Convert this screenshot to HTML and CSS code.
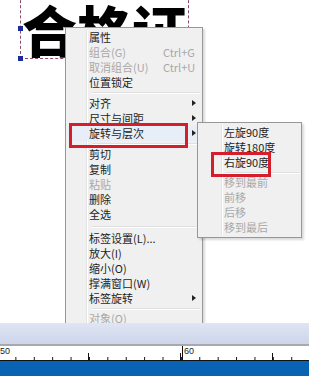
FILE: index.html
```html
<!DOCTYPE html>
<html>
<head>
    <title>合格证 - 标签编辑</title>
    <link rel="stylesheet" href="styles.css">
</head>
<body>
    <div class="workspace">
        <div class="label-text">合格证</div>
        <div class="selection"></div>
        <span class="handle handle-mid"></span>
        <span class="handle handle-bottom"></span>

        <ul class="menu main-menu">
            <li class="item">属性</li>
            <li class="item disabled">组合(G)<span class="key">Ctrl+G</span></li>
            <li class="item disabled">取消组合(U)<span class="key">Ctrl+U</span></li>
            <li class="item">位置锁定</li>
            <li class="sep"></li>
            <li class="item sub">对齐</li>
            <li class="item sub">尺寸与间距</li>
            <li class="item sub active marked">旋转与层次</li>
            <li class="sep"></li>
            <li class="item">剪切</li>
            <li class="item">复制</li>
            <li class="item disabled">粘贴</li>
            <li class="item">删除</li>
            <li class="item">全选</li>
            <li class="sep sep-wide"></li>
            <li class="item">标签设置(L)...</li>
            <li class="item">放大(I)</li>
            <li class="item">缩小(O)</li>
            <li class="item">撑满窗口(W)</li>
            <li class="item sub">标签旋转</li>
            <li class="sep sep-thin"></li>
            <li class="item disabled">对象(O)</li>
        </ul>

        <ul class="menu side-menu">
            <li class="item">左旋90度</li>
            <li class="item">旋转180度</li>
            <li class="item marked">右旋90度</li>
            <li class="sep"></li>
            <li class="item disabled">移到最前</li>
            <li class="item disabled">前移</li>
            <li class="item disabled">后移</li>
            <li class="item disabled">移到最后</li>
        </ul>
    </div>

    <div class="statusbar"></div>

    <div class="ruler">
        <span class="num num-50">50</span>
        <span class="num num-60">60</span>
    </div>

    <div class="bluebar"></div>
</body>
</html>
```

FILE: styles.css
```css
body {
    margin: 0;
    background-color: #fff;
    font-family: "Noto Sans CJK SC", "Liberation Sans", sans-serif;
    overflow: hidden;
}

.workspace {
    position: relative;
    height: 323px;
    overflow: hidden;
}

.label-text {
    display: inline-block;
    padding-left: 22px;
    margin-top: -6px;
    font-size: 55px;
    line-height: 68px;
    font-weight: 900;
    color: #000;
}

/* dashed selection frame round the label text */
.selection {
    position: absolute;
    left: 20px;
    top: -10px;
    width: 167px;
    height: 68px;
    border-left: 1px dashed #8a4a6a;
    border-right: 1px dashed #8a4a6a;
    border-bottom: 1px dashed #8a4a6a;
}

.handle {
    position: absolute;
    left: 18px;
    width: 5px;
    height: 5px;
    background-color: #1c2a9a;
}

.handle-mid {
    top: 26px;
}

.handle-bottom {
    top: 56px;
}

/* context menus */
.menu {
    position: absolute;
    margin: 0;
    padding: 2px 2px;
    list-style: none;
    background-color: #f0f0f0;
    border: 1px solid #979797;
    box-shadow: 2px 2px 2px rgba(0, 0, 0, 0.15);
    font-size: 11px;
    color: #1e1e1e;
}

.menu::before {
    content: "";
    position: absolute;
    top: 2px;
    bottom: 2px;
    width: 1px;
    background-color: #e2e3e3;
    border-right: 1px solid #fff;
}

.main-menu {
    left: 65px;
    top: 27px;
    width: 132px;
    height: 320px;
}

.main-menu::before {
    left: 20px;
}

.side-menu {
    left: 197px;
    top: 122px;
    width: 99px;
}

.side-menu::before {
    left: 23px;
}

.item {
    position: relative;
    height: 15px;
    line-height: 15px;
    white-space: nowrap;
}

.main-menu .item {
    padding-left: 21px;
}

.side-menu .item {
    padding-left: 24px;
}

.item.disabled {
    color: #a8a8a8;
}

.key {
    position: absolute;
    left: 95px;
    top: 0;
}

.sub::after {
    content: "";
    position: absolute;
    right: 4px;
    top: 4px;
    border-left: 4px solid #222;
    border-top: 3.5px solid transparent;
    border-bottom: 3.5px solid transparent;
}

.active {
    background-color: #e8eef8;
}

/* red annotation frames */
.marked::before {
    content: "";
    position: absolute;
    border: 3px solid #d41e2c;
}

.main-menu .marked::before {
    left: 1px;
    right: 12px;
    top: -3px;
    bottom: -7px;
}

.side-menu .marked::before {
    left: 11px;
    right: 28px;
    top: -3px;
    bottom: -7px;
}

.sep {
    height: 1px;
    margin: 2px 0 2px 24px;
    background-color: #e0e0e0;
    border-bottom: 1px solid #fff;
}

.side-menu .sep {
    margin: 2px 0 1px 26px;
}

.main-menu .sep-wide {
    margin-top: 4px;
    margin-bottom: 3px;
}

.main-menu .sep-thin {
    margin-top: 2px;
    margin-bottom: 1px;
}

/* bottom area */
.statusbar {
    height: 21px;
    background: linear-gradient(#dfe5f3, #cdd5ea);
    border-bottom: 2px solid #a7a9ad;
}

.ruler {
    position: relative;
    height: 14px;
    background-color: #fff;
    border-bottom: 1px solid #111;
    background-image:
        linear-gradient(#111, #111),
        linear-gradient(to right, #111 1px, transparent 1px),
        linear-gradient(to right, #111 1px, transparent 1px);
    background-size: 1px 14px, 92px 7px, 18.4px 3px;
    background-position: 182px 0, 88px 100%, -3px 100%;
    background-repeat: no-repeat, repeat-x, repeat-x;
}

.num {
    position: absolute;
    top: 0;
    font-family: "Liberation Sans", sans-serif;
    font-size: 9px;
    line-height: 10px;
    color: #222;
}

.num-50 {
    left: 0;
}

.num-60 {
    left: 184px;
}

.bluebar {
    height: 15px;
    background-color: #0a62b2;
}
```
